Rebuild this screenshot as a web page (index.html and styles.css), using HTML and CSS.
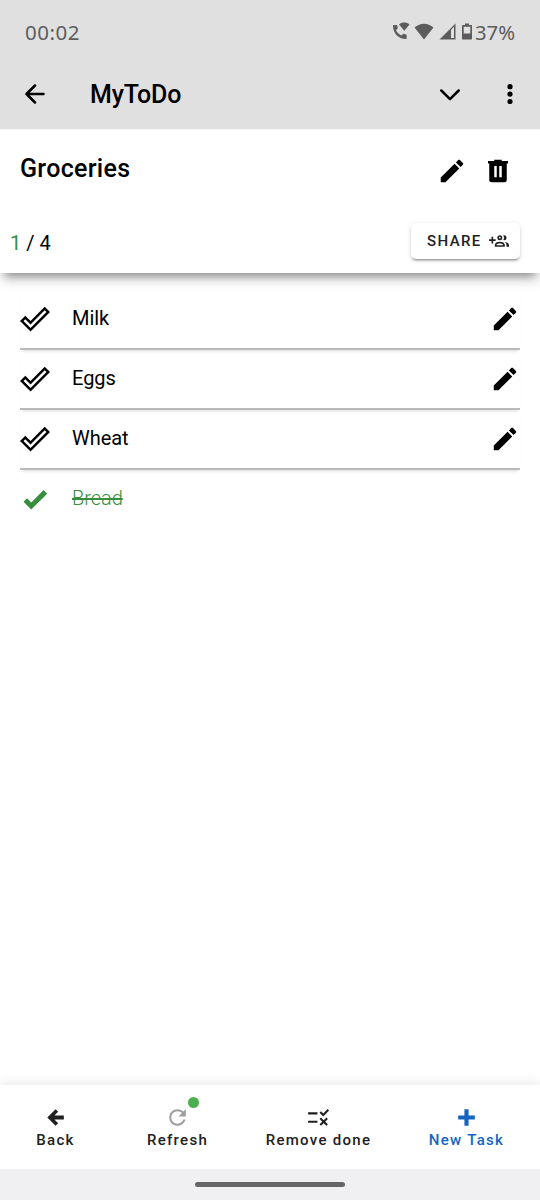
FILE: index.html
```html
<!DOCTYPE html>
<html lang="en">
<head>
<meta charset="utf-8">
<title>MyToDo</title>
<link rel="stylesheet" href="styles.css">
</head>
<body>
<svg class="defs" aria-hidden="true">
  <symbol id="pencil" viewBox="0 0 24 24"><path d="M20.71,7.04C21.1,6.65 21.1,6 20.71,5.63L18.37,3.29C18,2.9 17.35,2.9 16.96,3.29L15.12,5.12L18.87,8.87M17.81,9.93L14.06,6.18L3,17.25V21H6.75L17.81,9.93Z"/></symbol>
  <symbol id="check-outline" viewBox="0 0 24 24"><path d="M19.78,2.2L24,6.44L8.44,22L0,13.55L4.22,9.31L8.44,13.55L19.78,2.2M19.78,5L8.44,16.36L4.22,12.19L2.81,13.55L8.44,19.17L21.19,6.44L19.78,5Z"/></symbol>
</svg>
<div class="app">
  <header class="top">
    <div class="status">
      <span class="time">00:02</span>
      <div class="indicators">
        <svg class="call" viewBox="0 0 18 18"><path d="M1 4C1 3.3 1.4 3 2 3H4.500C5 3 5.200 3.300 5.300 3.800L5.800 6.200L4 8.200C5.200 10.500 7 12.400 9.500 13.600L11.300 11.800L14 12.500C14.500 12.600 14.700 12.900 14.700 13.400V16C14.700 16.600 14.400 17 13.700 17C6.500 17 1 11 1 4Z"/><path d="M7 2.500C10 -0.100 14.500 -0.100 17.500 2.500L12.300 8.800Z"/></svg>
        <svg class="wifi" viewBox="0 0 20 17"><path d="M0.500 4.500C6 -0.600 14 -0.600 19.500 4.500L10 16.500Z"/></svg>
        <svg class="signal" viewBox="0 0 17 17"><path fill-rule="evenodd" d="M0.500 16.500L16.500 0.500V16.500ZM12 6.800V15H15V3.800Z"/></svg>
        <svg class="battery" viewBox="0 0 10 17"><path fill-rule="evenodd" d="M3 0.500H7V2H9C9.600 2 10 2.400 10 3V15.500C10 16.100 9.600 16.500 9 16.500H1C.4 16.500 0 16.100 0 15.500V3C0 2.400 .4 2 1 2H3ZM1.700 3.800V10.500H8.300V3.800Z"/></svg>
        <span class="percent">37%</span>
      </div>
    </div>
    <div class="toolbar">
      <svg class="nav-back" viewBox="0 0 20 20"><path d="M18.500 10H1.500M10 1.500L1.500 10L10 18.500"/></svg>
      <h1>MyToDo</h1>
      <svg class="chevron" viewBox="0 0 20 12"><path d="M1.300 1.500L10 10.200L18.700 1.500"/></svg>
      <svg class="more" viewBox="0 0 6 20"><circle cx="3" cy="2.700" r="2.600"/><circle cx="3" cy="10.100" r="2.600"/><circle cx="3" cy="17.500" r="2.600"/></svg>
    </div>
  </header>

  <section class="list-head">
    <div class="title-row">
      <h2>Groceries</h2>
      <svg class="icon edit"><use href="#pencil"/></svg>
      <svg class="icon" viewBox="0 0 24 24"><path d="M9,3V4H4V6H5V19A2,2 0 0,0 7,21H17A2,2 0 0,0 19,19V6H20V4H15V3H9M9,8H11V17H9V8M13,8H15V17H13V8Z"/></svg>
    </div>
    <div class="count-row">
      <span class="count"><span class="done-count">1</span> / 4</span>
      <button class="share">SHARE
        <svg viewBox="0 0 24 24"><path d="M13 11A3 3 0 1 0 10 8A3 3 0 0 0 13 11M13 7A1 1 0 1 1 12 8A1 1 0 0 1 13 7M17.11 10.86A5 5 0 0 0 17.11 5.14A2.91 2.91 0 0 1 18 5A3 3 0 0 1 18 11A2.91 2.91 0 0 1 17.11 10.86M13 13C7 13 7 17 7 17V19H19V17S19 13 13 13M9 17C9 16.71 9.32 15 13 15C16.5 15 16.94 16.56 17 17M24 17V19H21V17A5.6 5.6 0 0 0 19.2 13.06C24 13.55 24 17 24 17M8 12H5V15H3V12H0V10H3V7H5V10H8Z"/></svg>
      </button>
    </div>
  </section>

  <main class="tasks">
    <div class="task"><svg class="icon"><use href="#check-outline"/></svg><span>Milk</span><svg class="icon"><use href="#pencil"/></svg></div>
    <div class="task"><svg class="icon"><use href="#check-outline"/></svg><span>Eggs</span><svg class="icon"><use href="#pencil"/></svg></div>
    <div class="task"><svg class="icon"><use href="#check-outline"/></svg><span>Wheat</span><svg class="icon"><use href="#pencil"/></svg></div>
    <div class="task done"><svg class="icon" viewBox="0 0 24 24"><path d="M9,20.42L2.79,14.21L5.62,11.38L9,14.77L18.88,4.88L21.71,7.71L9,20.42Z"/></svg><span>Bread</span></div>
  </main>

  <nav class="bottom-nav">
    <a class="item back"><svg viewBox="0 0 24 24"><path d="M20,10V14H11L14.5,17.5L12.08,19.92L4.16,12L12.08,4.08L14.5,6.5L11,10H20Z"/></svg>Back</a>
    <a class="item refresh"><span class="badge-wrap"><svg viewBox="0 0 24 24"><path d="M17.65,6.35C16.2,4.9 14.21,4 12,4A8,8 0 0,0 4,12A8,8 0 0,0 12,20C15.73,20 18.84,17.45 19.73,14H17.65C16.83,16.33 14.61,18 12,18A6,6 0 0,1 6,12A6,6 0 0,1 12,6C13.66,6 15.14,6.69 16.22,7.78L13,11H20V4L17.65,6.35Z"/></svg><i class="badge"></i></span>Refresh</a>
    <a class="item remove"><svg viewBox="0 0 24 24"><path d="M16.54,11L13,7.46l1.41-1.41l2.12,2.12l4.24-4.24l1.41,1.41L16.54,11z M11,7H2v2h9V7z M21,13.41L19.59,12L17,14.59L14.41,12L13,13.41L15.59,16L13,18.59L14.41,20L17,17.41L19.59,20L21,18.59L18.41,16L21,13.41z M11,15H2v2h9V15z"/></svg>Remove done</a>
    <a class="item new"><svg viewBox="0 0 24 24"><path d="M20 14H14V20H10V14H4V10H10V4H14V10H20V14Z"/></svg>New Task</a>
  </nav>
  <div class="gesture"><span></span></div>
</div>
</body>
</html>
```
FILE: styles.css
```css
* { box-sizing: border-box; }
body { margin: 0; font-family: Roboto, sans-serif; color: #000; background: #fff; }
svg { display: block; flex: none; fill: currentColor; }
.defs { display: none; }
.app { width: 540px; height: 1200px; display: flex; flex-direction: column; overflow: hidden; }

.top { height: 129px; flex: none; background: #e0e0e0; }
.status { height: 64px; padding: 0 25px; display: flex; justify-content: space-between; align-items: center; color: #5c5c5c; }
.time { font: 20.500px/24px "Noto Sans", sans-serif; letter-spacing: .5px; }
.indicators { display: flex; align-items: center; }
.indicators svg { margin-top: -2px; }
.call { width: 18px; height: 18px; margin-right: 4px; }
.wifi { width: 20px; height: 17px; margin-right: 5px; }
.signal { width: 17px; height: 17px; margin-right: 6px; }
.battery { width: 10px; height: 17px; margin-right: 3px; }
.percent { font: 20.300px/24px "Noto Sans", sans-serif; }
.toolbar { height: 60px; padding: 0 27px 0 25px; display: flex; align-items: center; }
.toolbar path { fill: none; stroke: #000; stroke-width: 2.500; stroke-linecap: round; stroke-linejoin: round; }
.nav-back { width: 20px; height: 20px; margin-right: 45px; }
.toolbar h1 { flex: 1; margin: 1px 0 0; font-size: 25px; font-weight: 500; line-height: 30px; letter-spacing: -.2px; }
.chevron { width: 20px; height: 12px; margin: 1px 47px 0 0; }
.more { width: 6px; height: 20px; }

.icon { width: 30px; height: 30px; }
.list-head { height: 144px; flex: none; position: relative; border-top: 1px solid #f5f5f5; background: #fff; box-shadow: 0 8px 9px -5px rgba(0,0,0,.42), 0 9px 12px rgba(0,0,0,.09); clip-path: inset(0 0 -30px 0); }
.title-row { height: 82px; padding-right: 27px; display: flex; align-items: center; }
.title-row h2 { flex: 1; margin: -5px 0 0 20px; font-size: 25px; font-weight: 500; line-height: 32px; letter-spacing: .3px; }
.edit { margin-right: 16px; }
.count-row { display: flex; justify-content: space-between; align-items: center; padding: 11px 20px 0 10px; }
.count { font-size: 20px; line-height: 28px; padding-top: 3px; }
.done-count { color: #388e3c; }
.share { width: 109px; height: 36px; border: 0; border-radius: 5px; background: #fff; color: #212121; display: flex; align-items: center; gap: 7px; padding: 0 0 0 16px; font: 500 15px Roboto, sans-serif; letter-spacing: 1.400px; box-shadow: 0 3px 2px -2px rgba(0,0,0,.3), 0 2px 3px rgba(0,0,0,.16), 0 1px 6px rgba(0,0,0,.08); }
.share svg { width: 20px; height: 20px; }

.tasks { flex: 1; padding: 17px 20px 0; }
.task { height: 60px; display: flex; align-items: center; border-bottom: 2px solid #bababa; box-shadow: 0 3px 3px -2px rgba(0,0,0,.15); }
.task span { flex: 1; margin: -2px 0 0 22px; font-size: 20px; line-height: 28px; letter-spacing: -.05px; }
.task.done { height: 58px; border: 0; box-shadow: none; color: #388e3c; }
.task.done span { flex: none; font-weight: 300; text-decoration: line-through; }

.bottom-nav { height: 84px; flex: none; display: flex; color: #212121; background: #fff; box-shadow: 0 0 13px rgba(0,0,0,.12); }
.item { display: flex; flex-direction: column; align-items: center; padding-top: 20px; font-size: 15px; font-weight: 500; line-height: 20px; letter-spacing: 1.300px; white-space: nowrap; }
.item svg { width: 25px; height: 25px; }
.back { width: 111px; }
.refresh { width: 133px; }
.refresh svg { color: #9e9e9e; }
.remove { width: 149px; }
.new { width: 147px; color: #1565c0; }
.badge-wrap { position: relative; }
.badge { position: absolute; left: 23px; top: -8px; width: 11px; height: 11px; border-radius: 50%; background: #4caf50; }
.gesture { height: 31px; flex: none; background: #f0f0f2; display: flex; justify-content: center; align-items: center; }
.gesture span { width: 150px; height: 5px; border-radius: 3px; background: #666; }
```
